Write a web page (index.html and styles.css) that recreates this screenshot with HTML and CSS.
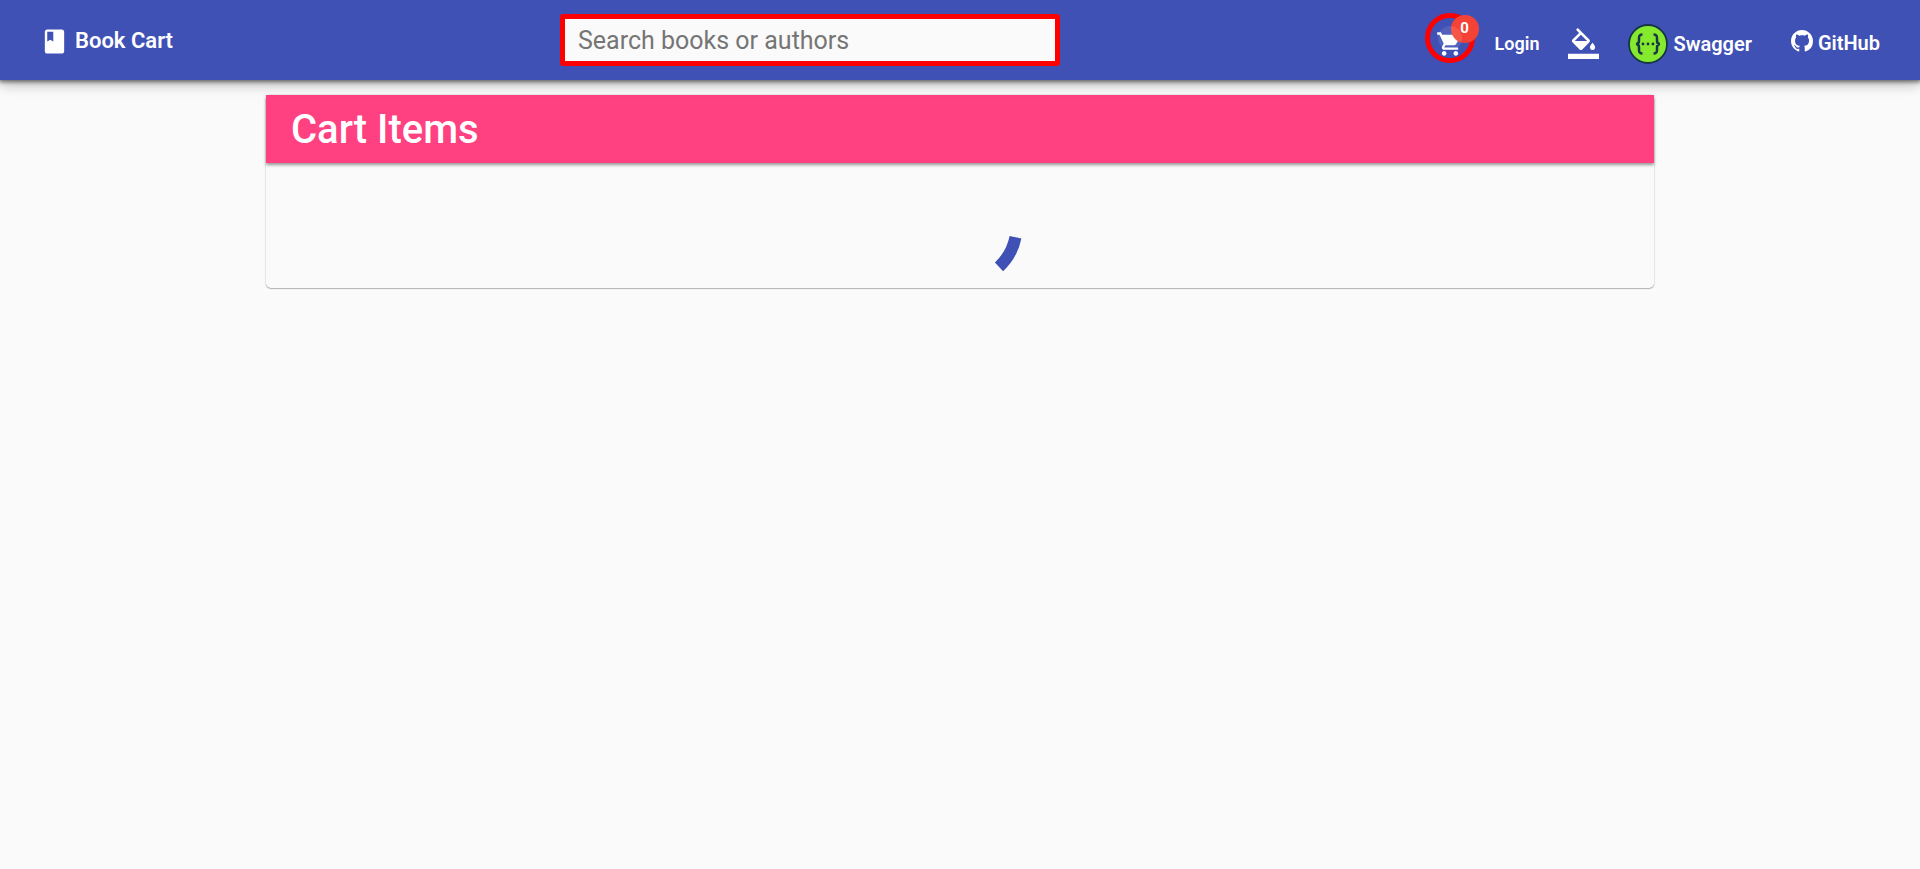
FILE: index.html
```html
<!DOCTYPE html>
<html lang="en">
<head>
<meta charset="utf-8">
<meta name="viewport" content="width=device-width, initial-scale=1">
<title>Book Cart</title>
<link rel="stylesheet" href="styles.css">
</head>
<body>
<header class="toolbar">
  <div class="toolbar-start">
    <a class="brand" href="#">
      <svg class="brand-icon" viewBox="0 0 24 24" aria-hidden="true"><path d="M18 2H6c-1.100 0-2 .9-2 2v16c0 1.100.9 2 2 2h12c1.100 0 2-.9 2-2V4c0-1.100-.9-2-2-2zM6 4h5v8l-2.500-1.500L6 12V4z"/></svg>
      <span>Book Cart</span>
    </a>
  </div>
  <input class="search" type="search" placeholder="Search books or authors" aria-label="Search books or authors">
  <nav class="toolbar-end">
    <button class="cart" type="button" aria-label="Shopping cart, 0 items">
      <svg class="cart-icon" viewBox="0 0 24 24" aria-hidden="true"><path d="M7 18c-1.100 0-1.990.9-1.990 2S5.900 22 7 22s2-.9 2-2-.9-2-2-2zM1 2v2h2l3.600 7.590-1.350 2.450c-.16.280-.25.610-.25.960 0 1.100.9 2 2 2h12v-2H7.420c-.14 0-.25-.11-.25-.25l.03-.12.9-1.630h7.450c.75 0 1.410-.41 1.750-1.030l3.580-6.490c.08-.14.12-.31.12-.48 0-.55-.45-1-1-1H5.210l-.94-2H1zm16 16c-1.100 0-1.990.9-1.990 2s.89 2 1.990 2 2-.9 2-2-.9-2-2-2z"/></svg>
      <span class="badge">0</span>
    </button>
    <button class="login" type="button">Login</button>
    <button class="theme" type="button" aria-label="Select theme">
      <svg class="theme-icon" viewBox="0 0 24 24" aria-hidden="true"><path d="M16.560 8.940L7.620 0 6.210 1.410l2.380 2.380-5.150 5.150c-.59.590-.59 1.540 0 2.120l5.500 5.500c.29.290.68.440 1.060.44s.77-.15 1.060-.44l5.500-5.500c.59-.58.59-1.530 0-2.120zM5.210 10L10 5.210 14.790 10H5.210zM19 11.500s-2 2.170-2 3.500c0 1.100.9 2 2 2s2-.9 2-2c0-1.330-2-3.500-2-3.500zM0 20h24v4H0z"/></svg>
    </button>
    <a class="link swagger" href="#">
      <svg class="swagger-icon" viewBox="0 0 40 40" aria-hidden="true">
        <circle cx="20" cy="20" r="19" fill="#85ea2d" stroke="#173647" stroke-width="1.800"/>
        <path d="M14.500 10.500c-3 0-3.500 1.200-3.500 3.500v2.500c0 2.300-.8 3.500-3 3.500 2.200 0 3 1.200 3 3.500V26c0 2.300.5 3.500 3.500 3.500M25.500 10.500c3 0 3.500 1.200 3.500 3.500v2.500c0 2.300.8 3.500 3 3.500-2.200 0-3 1.200-3 3.500V26c0 2.300-.5 3.500-3.500 3.500" fill="none" stroke="#173647" stroke-width="2.500"/>
        <g fill="#173647"><circle cx="15" cy="20" r="1.400"/><circle cx="20" cy="20" r="1.400"/><circle cx="25" cy="20" r="1.400"/></g>
      </svg>
      <span>Swagger</span>
    </a>
    <a class="link github" href="#">
      <svg class="github-icon" viewBox="0 0 16 16" aria-hidden="true"><path d="M8 0C3.580 0 0 3.580 0 8c0 3.540 2.290 6.530 5.470 7.590.4.070.55-.17.55-.38 0-.19-.01-.82-.01-1.490-2.010.37-2.530-.49-2.690-.94-.09-.23-.48-.94-.82-1.130-.28-.15-.68-.52-.01-.53.63-.01 1.080.58 1.230.82.72 1.210 1.870.87 2.330.66.070-.52.280-.87.510-1.070-1.780-.2-3.640-.89-3.640-3.950 0-.87.310-1.590.82-2.150-.08-.2-.36-1.020.08-2.120 0 0 .67-.21 2.200.82.64-.18 1.320-.27 2-.27s1.360.09 2 .27c1.530-1.040 2.200-.82 2.200-.82.44 1.100.16 1.920.08 2.120.51.560.82 1.270.82 2.150 0 3.070-1.870 3.750-3.650 3.950.29.250.54.730.54 1.480 0 1.070-.01 1.930-.01 2.200 0 .21.15.46.55.38A8.010 8.010 0 0 0 16 8c0-4.420-3.580-8-8-8z"/></svg>
      <span>GitHub</span>
    </a>
  </nav>
</header>
<main class="page">
  <section class="card">
    <h1 class="card-header">Cart Items</h1>
    <div class="card-content" role="status" aria-label="Loading cart">
      <svg class="spinner" viewBox="0 0 120 120" aria-hidden="true"><path d="M115.500 69.200A55.500 55.500 0 0 1 99 98.800"/></svg>
    </div>
  </section>
</main>
</body>
</html>
```
FILE: styles.css
```css
* {
  box-sizing: border-box;
}

body {
  margin: 0;
  background: #fafafa;
  font-family: Roboto, sans-serif;
}

button {
  border: 0;
  padding: 0;
  background: none;
  color: inherit;
  font: inherit;
  cursor: pointer;
}

a {
  color: inherit;
  text-decoration: none;
}

svg {
  display: block;
  fill: currentColor;
}

.toolbar {
  position: relative;
  z-index: 1;
  display: flex;
  align-items: center;
  height: 80px;
  padding: 0 40px;
  background: #3f51b5;
  color: #fff;
  font-size: 20px;
  font-weight: 600;
  box-shadow: 0 1px 4px 1px rgba(0, 0, 0, .5), 0 6px 10px rgba(0, 0, 0, .14), 0 1px 18px rgba(0, 0, 0, .12);
}

.toolbar-start {
  flex: 1 1 0;
}

.brand {
  display: flex;
  align-items: center;
  gap: 6px;
  font-size: 22px;
}

.brand-icon {
  width: 29px;
  height: 29px;
  margin-top: 3px;
}

.search {
  width: 500px;
  height: 52px;
  border: 5px solid #f00;
  border-radius: 3px;
  padding: 0 13px;
  background: #fafafa;
  color: #222;
  font: 400 25px Roboto, sans-serif;
  outline: none;
  appearance: none;
}

.search::placeholder {
  color: #757575;
}

.toolbar-end {
  flex: 0 0 820px;
  display: flex;
  align-items: center;
  justify-content: flex-end;
  padding-top: 6px;
}

.cart {
  position: relative;
  display: grid;
  place-items: center;
  width: 50px;
  height: 50px;
  margin-bottom: 10px;
  padding-top: 12px;
  border: 5px solid #f00;
  border-radius: 50%;
}

.cart::after {
  content: "";
  position: absolute;
  inset: 8px;
  border-radius: 50%;
  background: rgba(255, 255, 255, .1);
}

.cart-icon {
  width: 28px;
  height: 28px;
}

.badge {
  position: absolute;
  top: -3px;
  right: -9px;
  width: 28px;
  height: 28px;
  border-radius: 50%;
  background: #f44336;
  font-size: 15px;
  font-weight: 700;
  line-height: 26px;
}

.login {
  margin-left: 20px;
  font-size: 18px;
}

.theme {
  margin-left: 29px;
}

.theme-icon {
  width: 31px;
  height: 31px;
}

.link {
  display: flex;
  align-items: center;
  gap: 5px;
}

.swagger {
  margin-top: 2px;
  margin-left: 29px;
}

.swagger-icon {
  width: 40px;
  height: 40px;
}

.github {
  margin-left: 39px;
}

.github-icon {
  width: 22px;
  height: 22px;
  margin-bottom: 4px;
}

.page {
  padding: 15px 266px;
}

.card {
  border-radius: 5px;
  box-shadow: 0 1px 1px rgba(0, 0, 0, .25), 0 0 2px rgba(0, 0, 0, .2);
}

.card-header {
  margin: 0;
  padding: 11px 25px 9px;
  background: #ff4081;
  color: #fff;
  font-size: 40px;
  font-weight: 500;
  line-height: 48px;
  box-shadow: 0 2px 3px rgba(0, 0, 0, .4);
}

.card-content {
  display: flex;
  justify-content: center;
  padding-top: 5px;
}

.spinner {
  width: 120px;
  height: 120px;
  overflow: visible;
}

.spinner path {
  fill: none;
  stroke: #3f51b5;
  stroke-width: 12px;
}
```
